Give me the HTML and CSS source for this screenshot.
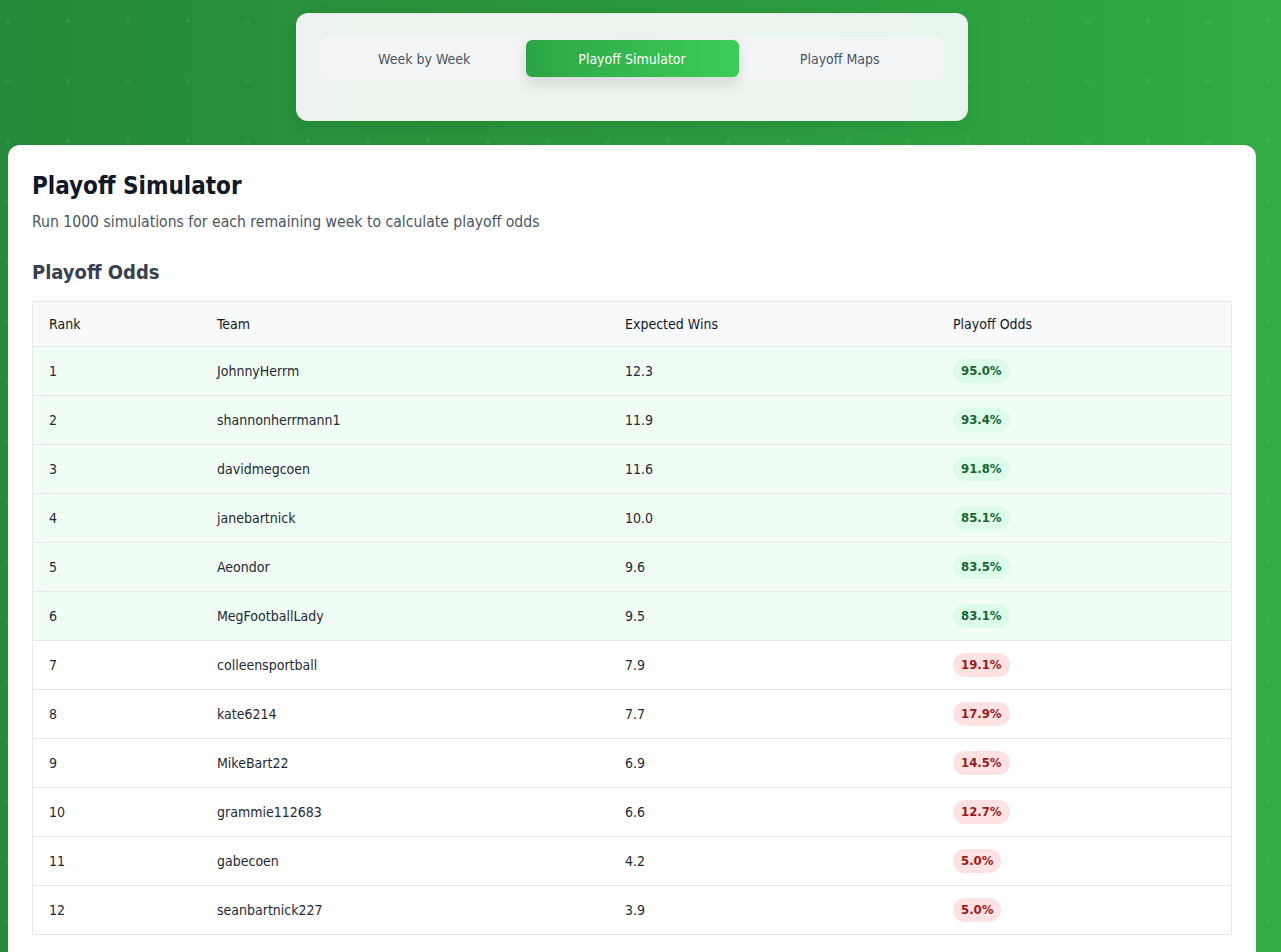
FILE: index.html
```html
<!DOCTYPE html>
<html>
<head>
<meta charset="utf-8">
<link rel="stylesheet" href="styles.css">
</head>
<body>
<div class="page">
  <div class="nav-wrap">
    <nav class="nav-card">
      <div class="tabs">
        <div class="tab">Week by Week</div>
        <div class="tab active">Playoff Simulator</div>
        <div class="tab">Playoff Maps</div>
      </div>
    </nav>
  </div>
  <main class="card">
    <h1 class="title">Playoff Simulator</h1>
    <p class="subtitle">Run 1000 simulations for each remaining week to calculate playoff odds</p>
    <h2 class="section">Playoff Odds</h2>
    <table class="odds">
      <thead>
        <tr><th class="c-rank">Rank</th><th class="c-team">Team</th><th class="c-wins">Expected Wins</th><th>Playoff Odds</th></tr>
      </thead>
      <tbody>
        <tr class="in"><td>1</td><td>JohnnyHerrm</td><td>12.3</td><td><span class="badge good">95.0%</span></td></tr>
        <tr class="in"><td>2</td><td>shannonherrmann1</td><td>11.9</td><td><span class="badge good">93.4%</span></td></tr>
        <tr class="in"><td>3</td><td>davidmegcoen</td><td>11.6</td><td><span class="badge good">91.8%</span></td></tr>
        <tr class="in"><td>4</td><td>janebartnick</td><td>10.0</td><td><span class="badge good">85.1%</span></td></tr>
        <tr class="in"><td>5</td><td>Aeondor</td><td>9.6</td><td><span class="badge good">83.5%</span></td></tr>
        <tr class="in"><td>6</td><td>MegFootballLady</td><td>9.5</td><td><span class="badge good">83.1%</span></td></tr>
        <tr><td>7</td><td>colleensportball</td><td>7.9</td><td><span class="badge bad">19.1%</span></td></tr>
        <tr><td>8</td><td>kate6214</td><td>7.7</td><td><span class="badge bad">17.9%</span></td></tr>
        <tr><td>9</td><td>MikeBart22</td><td>6.9</td><td><span class="badge bad">14.5%</span></td></tr>
        <tr><td>10</td><td>grammie112683</td><td>6.6</td><td><span class="badge bad">12.7%</span></td></tr>
        <tr><td>11</td><td>gabecoen</td><td>4.2</td><td><span class="badge bad">5.0%</span></td></tr>
        <tr><td>12</td><td>seanbartnick227</td><td>3.9</td><td><span class="badge bad">5.0%</span></td></tr>
      </tbody>
    </table>
  </main>
</div>
</body>
</html>
```
FILE: styles.css
```css
html, body {
  margin: 0;
  padding: 0;
}
body {
  font-family: "DejaVu Sans Condensed", "DejaVu Sans", sans-serif;
  background-color: #2a8c3b;
  background-image:
    radial-gradient(circle, rgba(255,255,255,0.07) 1.5px, transparent 2px),
    linear-gradient(90deg, #278939 0%, #2a9a3d 60%, #32ac43 100%);
  background-size: 60px 60px, 100% 100%;
  background-position: -22px -9px, 0 0;
  min-height: 952px;
  color: #111827;
}
.page {
  padding: 13px 25px 0 8px;
}
.nav-wrap {
  display: flex;
  justify-content: center;
}
.nav-card {
  width: 624px;
  padding: 24px 24px 41px 24px;
  background: linear-gradient(90deg, #ecf3ee, #e8f5eb);
  border-radius: 12px;
  box-shadow: 0 4px 14px rgba(0,0,0,0.08);
}
.tabs {
  display: flex;
  background: #f3f4f6;
  border-radius: 8px;
  padding: 3px;
  height: 37px;
}
.tab {
  flex: 1;
  display: flex;
  align-items: center;
  justify-content: center;
  font-size: 14px;
  color: #4b5563;
  border-radius: 6px;
}
.tab.active {
  flex: 0 0 213px;
  color: #ffffff;
  background: linear-gradient(90deg, #2ca544, #3dcd57);
  box-shadow: 0 6px 14px rgba(0,0,0,0.12);
}
.card {
  margin-top: 24px;
  background: #ffffff;
  border-radius: 12px;
  padding: 24px 24px 24px 24px;
  min-height: 800px;
}
.title {
  margin: 0;
  font-size: 24px;
  font-weight: 700;
  color: #111827;
  line-height: 32px;
  padding-top: 1px;
}
.subtitle {
  margin: 8px 0 0 0;
  font-size: 15.6px;
  color: #4b5563;
  line-height: 24px;
}
.section {
  margin: 24px 0 0 0;
  font-size: 20px;
  font-weight: 700;
  color: #374151;
  line-height: 28px;
}
.odds {
  margin-top: 15px;
  width: 100%;
  border-collapse: collapse;
  border: 1px solid #e5e7eb;
  font-size: 14px;
}
.odds th {
  text-align: left;
  font-weight: 400;
  background: #f9fafb;
  color: #111827;
  padding: 0 16px;
  height: 44px;
}
.c-rank { width: 136px; }
.c-team { width: 376px; }
.c-wins { width: 296px; }
.odds td {
  padding: 0 16px 1px 16px;
  height: 47px;
  border-top: 1px solid #e5e7eb;
  color: #1f2937;
}
.odds tr.in td {
  background: #f0fdf4;
}
.badge {
  display: inline-block;
  padding: 0 8px;
  height: 24px;
  line-height: 24px;
  border-radius: 12px;
  font-size: 13px;
  font-weight: 700;
}
.badge.good {
  background: #dcfce7;
  color: #166534;
}
.badge.bad {
  background: #fee2e2;
  color: #991b1b;
}
```
